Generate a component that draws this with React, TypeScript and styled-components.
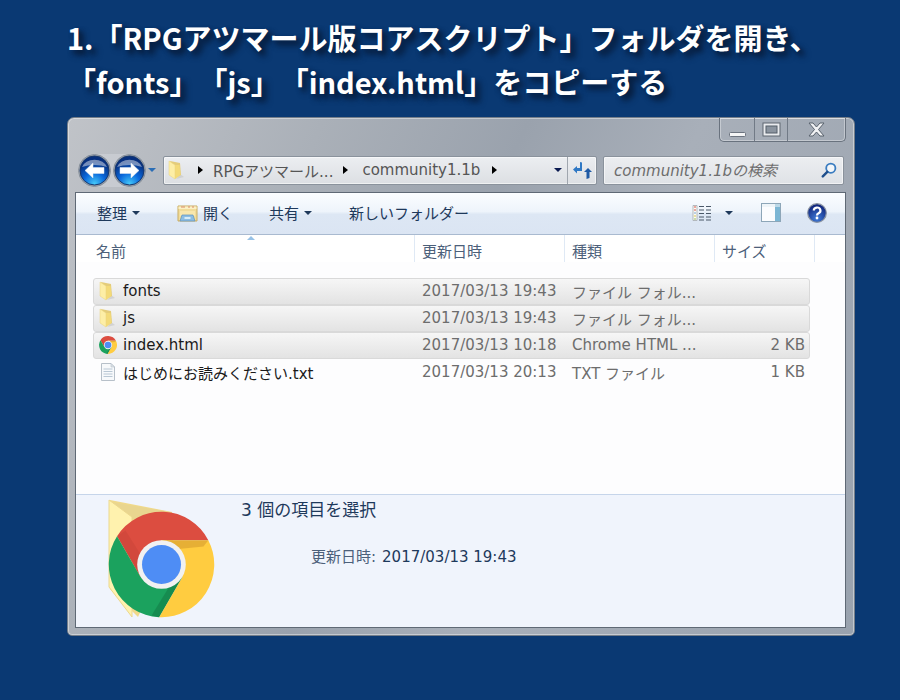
import React from 'react';
import styled, { createGlobalStyle } from 'styled-components';

const UI_FONT = '"DejaVu Sans", "Noto Sans CJK JP", sans-serif';

const GlobalStyle = createGlobalStyle`
  html, body {
    margin: 0;
    padding: 0;
    background: #0a3973;
  }
  * {
    box-sizing: border-box;
  }
`;

const Page = styled.div`
  width: 900px;
  height: 700px;
  overflow: hidden;
  padding: 15px 45px 0 67px;
  background: #0a3973;
  font-family: ${UI_FONT};
`;

const Heading = styled.h1`
  margin: 0 0 15px;
  height: 87px;
  color: #fff;
  font-family: "Noto Sans CJK JP", sans-serif;
  font-size: 29px;
  font-weight: 700;
  line-height: 44px;
  white-space: nowrap;
  text-spacing-trim: space-all;
  text-shadow: 5px 5px 6px #071d3d, 3px 3px 4px rgba(7, 29, 61, 0.7);
`;

const Window = styled.div`
  width: 788px;
  height: 519px;
  display: flex;
  flex-direction: column;
  padding: 0 7px 7px 7px;
  border: 1px solid #747e8a;
  border-radius: 7px 7px 5px 5px;
  background: linear-gradient(115deg, #c0c3c8 0%, #aab0b8 25%, #9aa2ad 45%, #a8afb9 62%, #99a2ae 100%);
  box-shadow: inset 0 0 0 1px rgba(255, 255, 255, 0.4);
`;

const CaptionBar = styled.div`
  display: flex;
  justify-content: flex-end;
  height: 24px;
  margin-bottom: 13px;
`;

const CaptionButtons = styled.div`
  display: flex;
  height: 24px;
  margin-right: 1px;
  border: 1px solid #69727e;
  border-top: none;
  border-radius: 0 0 5px 5px;
  box-shadow: inset 0 0 0 1px rgba(255, 255, 255, 0.35);
`;

const CaptionButton = styled.div<{ $width: number }>`
  width: ${({ $width }) => $width}px;
  display: flex;
  align-items: center;
  justify-content: center;
  & + & {
    border-left: 1px solid #717a86;
  }
`;

const NavRow = styled.div`
  display: flex;
  align-items: center;
  height: 30px;
  margin-bottom: 7px;
`;

const NavGroup = styled.div`
  display: flex;
  align-items: center;
  width: 86px;
  height: 34px;
  margin-left: 2px;
  padding-left: 1px;
`;

const NavPill = styled.div`
  display: flex;
  align-items: center;
  gap: 2px;
  border-radius: 17px;
  background: rgba(226, 230, 235, 0.35);
`;

const AddressBar = styled.div`
  width: 434px;
  height: 29px;
  display: flex;
  align-items: center;
  padding-left: 4px;
  border: 1px solid #8a929c;
  border-radius: 2px;
  background: linear-gradient(#eceef1, #dcdfe3);
  box-shadow: inset 0 0 0 1px rgba(255, 255, 255, 0.55);
  color: #555;
  font-size: 15px;
`;

const Crumb = styled.span<{ $gap: number }>`
  margin-left: ${({ $gap }) => $gap}px;
  white-space: nowrap;
`;

const CrumbArrow = styled.span<{ $gap: number }>`
  width: 0;
  height: 0;
  margin-left: ${({ $gap }) => $gap}px;
  border-style: solid;
  border-width: 4.5px 0 4.5px 5px;
  border-color: transparent transparent transparent #000;
`;

const RefreshCell = styled.div`
  width: 29px;
  height: 100%;
  display: flex;
  align-items: center;
  justify-content: center;
  border-left: 1px solid #a0a6ae;
`;

const DropCaret = styled.span<{ $color?: string; $left?: number; $right?: number; $push?: boolean }>`
  width: 0;
  height: 0;
  margin-left: ${({ $left, $push }) => ($push ? 'auto' : `${$left ?? 0}px`)};
  margin-right: ${({ $right }) => $right ?? 0}px;
  border-style: solid;
  border-width: 4px 4px 0 4px;
  border-color: ${({ $color }) => $color ?? '#1e395b'} transparent transparent transparent;
`;

const SearchBox = styled.div`
  width: 241px;
  height: 29px;
  margin-left: 6px;
  display: flex;
  align-items: center;
  justify-content: space-between;
  padding: 0 6px 1px 10px;
  border: 1px solid #8a929c;
  border-radius: 2px;
  background: linear-gradient(#eceef1, #dfe2e6);
  box-shadow: inset 0 0 0 1px rgba(255, 255, 255, 0.55);
  color: #6d6d6d;
  font-size: 15px;
  font-style: italic;
`;

const Content = styled.div`
  flex: 1;
  display: flex;
  flex-direction: column;
  min-height: 0;
  margin-right: 1px;
  border: 1px solid #5f6975;
  background: #fff;
`;

const Toolbar = styled.div`
  height: 42px;
  flex: none;
  display: flex;
  align-items: center;
  padding: 0 18px 2px 21px;
  border-bottom: 1px solid #a9bad0;
  background: linear-gradient(#fbfdff 0%, #eef4fb 45%, #dde7f4 52%, #dbe5f3 100%);
  color: #1e395b;
  font-size: 15px;
`;

const ToolItem = styled.div<{ $left?: number }>`
  display: flex;
  align-items: center;
  gap: 5px;
  margin-left: ${({ $left }) => $left ?? 0}px;
  white-space: nowrap;
`;

const ToolRight = styled.div`
  margin-left: auto;
  display: flex;
  align-items: center;
  gap: 26px;
`;

const ViewSwitch = styled.div`
  display: flex;
  align-items: center;
  gap: 13px;
  margin-right: 2px;
`;

const ColumnHeader = styled.div`
  position: relative;
  height: 27px;
  flex: none;
  display: grid;
  grid-template-columns: 339px 150px 150px 100px;
  background: #fff;
  color: #4c607a;
  font-size: 15px;
`;

const HeaderCell = styled.div<{ $pad: number }>`
  display: flex;
  align-items: center;
  padding: 3px 0 0 ${({ $pad }) => $pad}px;
  border-right: 1px solid #dfe9f5;
`;

const SortMark = styled.span`
  position: absolute;
  left: 171px;
  top: 1px;
  width: 0;
  height: 0;
  border-style: solid;
  border-width: 0 4px 4px 4px;
  border-color: transparent transparent #97c1e6 transparent;
`;

const FileList = styled.div`
  flex: 1;
  padding: 16px 35px 0 17px;
  background: #fdfdfe;
`;

const FileRow = styled.div<{ $selected?: boolean }>`
  height: 27px;
  display: grid;
  grid-template-columns: 329px 150px 150px 1fr;
  align-items: center;
  padding: 0 4px 1px 0;
  border: 1px solid ${({ $selected }) => ($selected ? '#d9d9d9' : 'transparent')};
  border-radius: 3px;
  background: ${({ $selected }) => ($selected ? 'linear-gradient(#f6f6f6, #e3e3e3)' : 'transparent')};
  font-size: 15px;
`;

const NameCell = styled.div`
  display: flex;
  align-items: center;
  gap: 6px;
  padding-left: 5px;
  color: #1a1a1a;
  white-space: nowrap;
`;

const MetaCell = styled.div<{ $right?: boolean }>`
  margin-left: ${({ $right }) => ($right ? 0 : -1)}px;
  color: #6d6d6d;
  text-align: ${({ $right }) => ($right ? 'right' : 'left')};
  white-space: nowrap;
`;

const DetailsPane = styled.div`
  height: 133px;
  flex: none;
  display: grid;
  grid-template-columns: 165px 1fr;
  border-top: 1px solid #c6d5ea;
  background: #f0f4fc;
  color: #1e395b;
`;

const PreviewCell = styled.div`
  padding: 4px 0 0 32px;
`;

const DetailText = styled.div`
  padding-top: 3px;
`;

const SelectedCount = styled.div`
  font-size: 17px;
  line-height: 24px;
`;

const Modified = styled.div`
  margin: 25px 0 0 70px;
  display: flex;
  gap: 6px;
  font-size: 15px;
  line-height: 20px;
`;

const ModifiedLabel = styled.span`
  color: #4c607a;
`;

const SmallFolder = () => (
  <svg width="18" height="20" viewBox="0 0 18 20">
    <path d="M8 19 L16 17 L12 14 Z" fill="#c9c9c9" opacity="0.7" />
    <path d="M2 1 L12 3 L13 15 L7 18 Z" fill="#e4cc7a" />
    <path d="M7 5 L11.5 5 L12.5 15 L7 19 Z" fill="#f3da78" />
    <path d="M1 1 L7 5 L7 19 L1 15 Z" fill="#fdeea6" stroke="#e8d27d" strokeWidth="0.5" />
  </svg>
);

const ChromeShapes = () => (
  <>
    <path d="M46.8 -24.3 A52.7 52.7 0 0 0 -44.44 -28.35 L-21.04 12.15 L0 0 L0 -24.3 Z" fill="#dc4d40" />
    <path d="M-44.44 -28.35 A52.7 52.7 0 0 0 -2.36 52.65 L21.04 12.15 L0 0 L-21.04 12.15 Z" fill="#1ba25e" />
    <path d="M-2.36 52.65 A52.7 52.7 0 0 0 46.8 -24.3 L0 -24.3 L0 0 L21.04 12.15 Z" fill="#ffcc40" />
    <path d="M-44.44 -28.35 L-21.04 12.15 L-12 4 L-36 -34 Z" fill="#8f2a22" opacity="0.12" />
    <path d="M-2.36 52.65 L21.04 12.15 L14 12 L-10 51 Z" fill="#0c5a32" opacity="0.3" />
    <path d="M46.8 -24.3 L0 -24.3 L12 -15 L42 -18 Z" fill="#a5651a" opacity="0.28" />
    <circle r="24.3" fill="#f1f1f1" />
    <circle r="19.5" fill="#4e8df5" />
  </>
);

const ChromeLogo = ({ size }: { size: number }) => (
  <svg width={size} height={size} viewBox="-53 -53 106 106">
    <ChromeShapes />
  </svg>
);

const TextFileIcon = () => (
  <svg width="18" height="20" viewBox="0 0 18 20">
    <path d="M2.5 1.5 H12 L15.5 5 V18.5 H2.5 Z" fill="#f7f9fb" stroke="#b7c0c9" />
    <path d="M12 1.5 V5 H15.5 Z" fill="#dfe4e9" stroke="#b7c0c9" strokeWidth="0.6" />
    <path d="M4.5 7 H13.5 M4.5 9.5 H13.5 M4.5 12 H13.5 M4.5 14.5 H13.5" stroke="#b9c7d4" />
  </svg>
);

const NavArrow = ({ flip, id }: { flip?: boolean; id: string }) => (
  <svg width="33" height="33" viewBox="0 0 33 33">
    <defs>
      <radialGradient id={id} cx="50%" cy="95%" r="75%">
        <stop offset="0%" stopColor="#45c8f8" />
        <stop offset="50%" stopColor="#0a68dc" />
        <stop offset="100%" stopColor="#07307f" />
      </radialGradient>
    </defs>
    <circle cx="16.5" cy="16.5" r="16" fill="#9aa2ac" stroke="#88909a" />
    <circle cx="16.5" cy="16.5" r="14.5" fill={`url(#${id})`} stroke="#17386e" />
    <path d="M4 13 A13 10 0 0 1 29 13 A20 9 0 0 0 4 13 Z" fill="#fff" opacity="0.45" />
    <g transform={flip ? 'rotate(180 16.5 16.5)' : undefined}>
      <path d="M7 16.5 L15 9 V13.5 H26 V19.5 H15 V24 Z" fill="#fff" stroke="#dfe7ef" strokeWidth="0.5" />
    </g>
  </svg>
);

const RefreshIcon = () => (
  <svg width="21" height="20" viewBox="0 0 21 20">
    <path d="M8 2 L10 2.5 L10 11 L5 11 V13.5 L1 9.5 L5 6 V8 H8 Z" fill="#2f78c4" />
    <path d="M16 8 L20 12 H17.5 V18 L14.5 19 V12 H12 Z" fill="#1f5aa5" />
  </svg>
);

const SearchIcon = () => (
  <svg width="16" height="16" viewBox="0 0 16 16">
    <circle cx="9.8" cy="6.2" r="4.6" fill="#f3f6f9" stroke="#3a7cc0" strokeWidth="1.8" />
    <path d="M6.3 9.8 L1.8 14.4" stroke="#1f4f8c" strokeWidth="2.4" strokeLinecap="round" />
  </svg>
);

const OpenIcon = () => (
  <svg width="21" height="20" viewBox="0 0 21 20">
    <path d="M1 3 H20 V18 H1 Z" fill="#f1dc9a" stroke="#c9ac63" />
    <path d="M1.5 3.5 H19.5 V6 H1.5 Z" fill="#fbf0c4" />
    <path d="M4 4 H8 M11 4 H13 M15 4 H17" stroke="#d98b6a" />
    <path d="M3 8 H18 V13 H3 Z" fill="#f9e7ad" />
    <path d="M5 12 H16 L18 18 H3 Z" fill="#8dbde2" stroke="#5f94bf" strokeWidth="0.7" />
    <path d="M7.5 14 H13.5 V16 H7.5 Z" fill="#d7ecf8" />
  </svg>
);

const ViewIcon = () => (
  <svg width="20" height="18" viewBox="0 0 20 18">
    <path d="M1 1.5 H5 V16.5 H1 Z" fill="#fbfbf4" stroke="#a4a9ad" strokeWidth="0.8" />
    <path d="M2 3 H4" stroke="#d9534a" />
    <path d="M2 6 H4" stroke="#d9534a" />
    <path d="M2 9 H4" stroke="#78a6d8" />
    <path d="M2 12 H4" stroke="#d8c450" />
    <path d="M2 15 H4" stroke="#93bf62" />
    <path d="M7 2.5 H12 M14 2.5 H19 M7 6 H12 M14 6 H19 M7 9.5 H12 M14 9.5 H19 M7 13 H12 M14 13 H19 M7 16 H12 M14 16 H19" stroke="#4a5868" />
  </svg>
);

const PaneIcon = () => (
  <svg width="20" height="19" viewBox="0 0 20 19">
    <rect x="0.5" y="0.5" width="19" height="18" fill="#fbfcfe" stroke="#8da6b8" />
    <rect x="14" y="1" width="5" height="17" fill="#7cb6d4" />
    <rect x="1" y="1" width="18" height="3" fill="#e6eef4" opacity="0.6" />
  </svg>
);

const HelpIcon = () => (
  <svg width="20" height="20" viewBox="0 0 20 20">
    <defs>
      <radialGradient id="helpFill" cx="50%" cy="80%" r="70%">
        <stop offset="0%" stopColor="#3f7bd8" />
        <stop offset="100%" stopColor="#12287f" />
      </radialGradient>
    </defs>
    <circle cx="10" cy="10" r="9.3" fill="url(#helpFill)" stroke="#8b94a2" strokeWidth="1.2" />
    <path d="M6.8 7.5 A3.3 3 0 1 1 11.6 10.2 Q10 11 10 12.4" fill="none" stroke="#fff" strokeWidth="2.2" />
    <circle cx="10" cy="15" r="1.4" fill="#fff" />
  </svg>
);

const LargePreview = () => (
  <svg width="108" height="120" viewBox="0 0 108 120">
    <path d="M2 1 L64 13 L66 40 L30 118 L2 90 Z" fill="#f0d98a" />
    <path d="M3 3 L62 13 L60 22 L24 20 Z" fill="#e9d58f" />
    <path d="M1 1 L24 18 L24 118 L1 88 Z" fill="#fff2ae" stroke="#ecd88e" />
    <g transform="translate(53.5 65.5)">
      <ChromeShapes />
    </g>
  </svg>
);

const files = [
  { name: 'fonts', date: '2017/03/13 19:43', type: 'ファイル フォル...', size: '', icon: <SmallFolder />, selected: true },
  { name: 'js', date: '2017/03/13 19:43', type: 'ファイル フォル...', size: '', icon: <SmallFolder />, selected: true },
  { name: 'index.html', date: '2017/03/13 10:18', type: 'Chrome HTML ...', size: '2 KB', icon: <ChromeLogo size={18} />, selected: true },
  { name: 'はじめにお読みください.txt', date: '2017/03/13 20:13', type: 'TXT ファイル', size: '1 KB', icon: <TextFileIcon />, selected: false },
];

export default function App() {
  return (
    <>
      <GlobalStyle />
      <Page>
        <Heading>
          <div>1.「RPGアツマール版コアスクリプト」フォルダを開き、</div>
          <div>「fonts」「js」「index.html」をコピーする</div>
        </Heading>
        <Window>
          <CaptionBar>
            <CaptionButtons>
              <CaptionButton $width={34}>
                <svg width="17" height="16" viewBox="0 0 17 16">
                  <rect x="0.5" y="10.5" width="16" height="4" rx="1" fill="#f4f5f6" stroke="#6c7480" />
                </svg>
              </CaptionButton>
              <CaptionButton $width={33}>
                <svg width="19" height="15" viewBox="0 0 19 15">
                  <rect x="1" y="1" width="17" height="13" fill="#e9ebee" stroke="#5e6771" />
                  <rect x="4" y="4" width="11" height="7" fill="#8b949f" stroke="#555e69" />
                </svg>
              </CaptionButton>
              <CaptionButton $width={58}>
                <svg width="17" height="15" viewBox="0 0 17 15">
                  <path d="M1 1 H5 L8.5 5 L12 1 H16 L10.5 7.5 L16 14 H12 L8.5 10 L5 14 H1 L6.5 7.5 Z" fill="#f1f2f4" stroke="#59626d" />
                </svg>
              </CaptionButton>
            </CaptionButtons>
          </CaptionBar>
          <NavRow>
            <NavGroup>
              <NavPill>
                <NavArrow id="navBack" />
                <NavArrow id="navForward" flip />
              </NavPill>
              <DropCaret $color="#2a6db5" $left={2} />
            </NavGroup>
            <AddressBar>
              <SmallFolder />
              <CrumbArrow $gap={12} />
              <Crumb $gap={10}>RPGアツマール...</Crumb>
              <CrumbArrow $gap={10} />
              <Crumb $gap={14}>community1.1b</Crumb>
              <CrumbArrow $gap={12} />
              <DropCaret $color="#0a1a50" $push $right={5} />
              <RefreshCell>
                <RefreshIcon />
              </RefreshCell>
            </AddressBar>
            <SearchBox>
              <span>community1.1bの検索</span>
              <SearchIcon />
            </SearchBox>
          </NavRow>
          <Content>
            <Toolbar>
              <ToolItem>
                整理
                <DropCaret />
              </ToolItem>
              <ToolItem $left={37}>
                <OpenIcon />
                開く
              </ToolItem>
              <ToolItem $left={36}>
                共有
                <DropCaret />
              </ToolItem>
              <ToolItem $left={37}>新しいフォルダー</ToolItem>
              <ToolRight>
                <ViewSwitch>
                  <ViewIcon />
                  <DropCaret />
                </ViewSwitch>
                <PaneIcon />
                <HelpIcon />
              </ToolRight>
            </Toolbar>
            <ColumnHeader>
              <SortMark />
              <HeaderCell $pad={20}>名前</HeaderCell>
              <HeaderCell $pad={7}>更新日時</HeaderCell>
              <HeaderCell $pad={7}>種類</HeaderCell>
              <HeaderCell $pad={7}>サイズ</HeaderCell>
            </ColumnHeader>
            <FileList>
              {files.map((file) => (
                <FileRow key={file.name} $selected={file.selected}>
                  <NameCell>
                    {file.icon}
                    {file.name}
                  </NameCell>
                  <MetaCell>{file.date}</MetaCell>
                  <MetaCell>{file.type}</MetaCell>
                  <MetaCell $right>{file.size}</MetaCell>
                </FileRow>
              ))}
            </FileList>
            <DetailsPane>
              <PreviewCell>
                <LargePreview />
              </PreviewCell>
              <DetailText>
                <SelectedCount>3 個の項目を選択</SelectedCount>
                <Modified>
                  <ModifiedLabel>更新日時:</ModifiedLabel>
                  <span>2017/03/13 19:43</span>
                </Modified>
              </DetailText>
            </DetailsPane>
          </Content>
        </Window>
      </Page>
    </>
  );
}
